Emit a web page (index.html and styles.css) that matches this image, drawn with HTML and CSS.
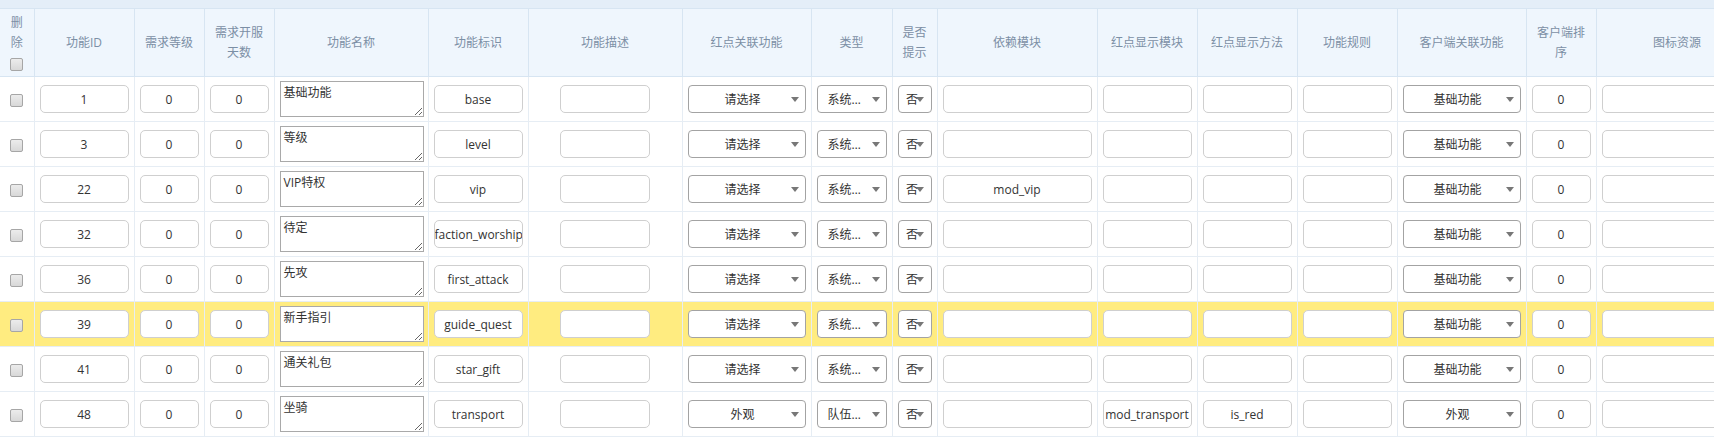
FILE: index.html
```html
<!DOCTYPE html>
<html lang="zh">
<head>
<meta charset="utf-8">
<title>功能配置</title>
<link rel="stylesheet" href="styles.css">
</head>
<body>
<div class="page">
  <table class="grid">
    <colgroup>
      <col class="w34"><col class="w100"><col class="w70"><col class="w70"><col class="w154"><col class="w100"><col class="w154"><col class="w129"><col class="w81"><col class="w45"><col class="w160"><col class="w100"><col class="w100"><col class="w100"><col class="w129"><col class="w70"><col class="w162">
    </colgroup>
    <thead>
      <tr>
        <th class="del-head">删<br>除<br><input type="checkbox" class="chk"></th>
        <th>功能ID</th>
        <th>需求等级</th>
        <th>需求开服天数</th>
        <th>功能名称</th>
        <th>功能标识</th>
        <th>功能描述</th>
        <th>红点关联功能</th>
        <th>类型</th>
        <th>是否提示</th>
        <th>依赖模块</th>
        <th>红点显示模块</th>
        <th>红点显示方法</th>
        <th>功能规则</th>
        <th>客户端关联功能</th>
        <th>客户端排序</th>
        <th>图标资源</th>
      </tr>
    </thead>
    <tbody>
      <tr>
        <td><input type="checkbox" class="chk"></td>
        <td><input class="inp w-full" value="1"></td>
        <td><input class="inp w-full" value="0"></td>
        <td><input class="inp w-full" value="0"></td>
        <td><textarea class="name">基础功能</textarea></td>
        <td><input class="inp w-full" value="base"></td>
        <td><input class="inp w-90" value=""></td>
        <td><select class="sel"><option>请选择</option></select></td>
        <td><select class="sel sel-type"><option>系统功能</option></select></td>
        <td><select class="sel sel-yn"><option>否</option></select></td>
        <td><input class="inp w-full" value=""></td>
        <td><input class="inp w-full" value=""></td>
        <td><input class="inp w-full" value=""></td>
        <td><input class="inp w-full" value=""></td>
        <td><select class="sel"><option>基础功能</option></select></td>
        <td><input class="inp w-full" value="0"></td>
        <td><input class="inp w-full" value=""></td>
      </tr>
      <tr>
        <td><input type="checkbox" class="chk"></td>
        <td><input class="inp w-full" value="3"></td>
        <td><input class="inp w-full" value="0"></td>
        <td><input class="inp w-full" value="0"></td>
        <td><textarea class="name">等级</textarea></td>
        <td><input class="inp w-full" value="level"></td>
        <td><input class="inp w-90" value=""></td>
        <td><select class="sel"><option>请选择</option></select></td>
        <td><select class="sel sel-type"><option>系统功能</option></select></td>
        <td><select class="sel sel-yn"><option>否</option></select></td>
        <td><input class="inp w-full" value=""></td>
        <td><input class="inp w-full" value=""></td>
        <td><input class="inp w-full" value=""></td>
        <td><input class="inp w-full" value=""></td>
        <td><select class="sel"><option>基础功能</option></select></td>
        <td><input class="inp w-full" value="0"></td>
        <td><input class="inp w-full" value=""></td>
      </tr>
      <tr>
        <td><input type="checkbox" class="chk"></td>
        <td><input class="inp w-full" value="22"></td>
        <td><input class="inp w-full" value="0"></td>
        <td><input class="inp w-full" value="0"></td>
        <td><textarea class="name">VIP特权</textarea></td>
        <td><input class="inp w-full" value="vip"></td>
        <td><input class="inp w-90" value=""></td>
        <td><select class="sel"><option>请选择</option></select></td>
        <td><select class="sel sel-type"><option>系统功能</option></select></td>
        <td><select class="sel sel-yn"><option>否</option></select></td>
        <td><input class="inp w-full" value="mod_vip"></td>
        <td><input class="inp w-full" value=""></td>
        <td><input class="inp w-full" value=""></td>
        <td><input class="inp w-full" value=""></td>
        <td><select class="sel"><option>基础功能</option></select></td>
        <td><input class="inp w-full" value="0"></td>
        <td><input class="inp w-full" value=""></td>
      </tr>
      <tr>
        <td><input type="checkbox" class="chk"></td>
        <td><input class="inp w-full" value="32"></td>
        <td><input class="inp w-full" value="0"></td>
        <td><input class="inp w-full" value="0"></td>
        <td><textarea class="name">待定</textarea></td>
        <td><input class="inp w-full" value="faction_worship"></td>
        <td><input class="inp w-90" value=""></td>
        <td><select class="sel"><option>请选择</option></select></td>
        <td><select class="sel sel-type"><option>系统功能</option></select></td>
        <td><select class="sel sel-yn"><option>否</option></select></td>
        <td><input class="inp w-full" value=""></td>
        <td><input class="inp w-full" value=""></td>
        <td><input class="inp w-full" value=""></td>
        <td><input class="inp w-full" value=""></td>
        <td><select class="sel"><option>基础功能</option></select></td>
        <td><input class="inp w-full" value="0"></td>
        <td><input class="inp w-full" value=""></td>
      </tr>
      <tr>
        <td><input type="checkbox" class="chk"></td>
        <td><input class="inp w-full" value="36"></td>
        <td><input class="inp w-full" value="0"></td>
        <td><input class="inp w-full" value="0"></td>
        <td><textarea class="name">先攻</textarea></td>
        <td><input class="inp w-full" value="first_attack"></td>
        <td><input class="inp w-90" value=""></td>
        <td><select class="sel"><option>请选择</option></select></td>
        <td><select class="sel sel-type"><option>系统功能</option></select></td>
        <td><select class="sel sel-yn"><option>否</option></select></td>
        <td><input class="inp w-full" value=""></td>
        <td><input class="inp w-full" value=""></td>
        <td><input class="inp w-full" value=""></td>
        <td><input class="inp w-full" value=""></td>
        <td><select class="sel"><option>基础功能</option></select></td>
        <td><input class="inp w-full" value="0"></td>
        <td><input class="inp w-full" value=""></td>
      </tr>
      <tr class="hl">
        <td><input type="checkbox" class="chk"></td>
        <td><input class="inp w-full" value="39"></td>
        <td><input class="inp w-full" value="0"></td>
        <td><input class="inp w-full" value="0"></td>
        <td><textarea class="name">新手指引</textarea></td>
        <td><input class="inp w-full" value="guide_quest"></td>
        <td><input class="inp w-90" value=""></td>
        <td><select class="sel"><option>请选择</option></select></td>
        <td><select class="sel sel-type"><option>系统功能</option></select></td>
        <td><select class="sel sel-yn"><option>否</option></select></td>
        <td><input class="inp w-full" value=""></td>
        <td><input class="inp w-full" value=""></td>
        <td><input class="inp w-full" value=""></td>
        <td><input class="inp w-full" value=""></td>
        <td><select class="sel"><option>基础功能</option></select></td>
        <td><input class="inp w-full" value="0"></td>
        <td><input class="inp w-full" value=""></td>
      </tr>
      <tr>
        <td><input type="checkbox" class="chk"></td>
        <td><input class="inp w-full" value="41"></td>
        <td><input class="inp w-full" value="0"></td>
        <td><input class="inp w-full" value="0"></td>
        <td><textarea class="name">通关礼包</textarea></td>
        <td><input class="inp w-full" value="star_gift"></td>
        <td><input class="inp w-90" value=""></td>
        <td><select class="sel"><option>请选择</option></select></td>
        <td><select class="sel sel-type"><option>系统功能</option></select></td>
        <td><select class="sel sel-yn"><option>否</option></select></td>
        <td><input class="inp w-full" value=""></td>
        <td><input class="inp w-full" value=""></td>
        <td><input class="inp w-full" value=""></td>
        <td><input class="inp w-full" value=""></td>
        <td><select class="sel"><option>基础功能</option></select></td>
        <td><input class="inp w-full" value="0"></td>
        <td><input class="inp w-full" value=""></td>
      </tr>
      <tr>
        <td><input type="checkbox" class="chk"></td>
        <td><input class="inp w-full" value="48"></td>
        <td><input class="inp w-full" value="0"></td>
        <td><input class="inp w-full" value="0"></td>
        <td><textarea class="name">坐骑</textarea></td>
        <td><input class="inp w-full" value="transport"></td>
        <td><input class="inp w-90" value=""></td>
        <td><select class="sel"><option>外观</option></select></td>
        <td><select class="sel sel-type"><option>队伍功能</option></select></td>
        <td><select class="sel sel-yn"><option>否</option></select></td>
        <td><input class="inp w-full" value=""></td>
        <td><input class="inp w-full" value="mod_transport"></td>
        <td><input class="inp w-full" value="is_red"></td>
        <td><input class="inp w-full" value=""></td>
        <td><select class="sel"><option>外观</option></select></td>
        <td><input class="inp w-full" value="0"></td>
        <td><input class="inp w-full" value=""></td>
      </tr>
    </tbody>
  </table>
</div>
</body>
</html>
```

FILE: styles.css
```css
html, body {
  margin: 0;
  padding: 0;
  overflow: hidden;
  background: #fff;
}

.page {
  padding-top: 8px;
  background: #e4eef8;
  width: max-content;
}

.grid {
  border-collapse: collapse;
  table-layout: fixed;
  width: 1758px;
  font-family: "Open Sans", "Noto Sans CJK SC", "Microsoft YaHei", sans-serif;
  font-size: 12px;
  color: #333;
  background: #fff;
}

.w34 { width: 34px; }
.w45 { width: 45px; }
.w70 { width: 70px; }
.w81 { width: 81px; }
.w100 { width: 100px; }
.w129 { width: 129px; }
.w154 { width: 154px; }
.w160 { width: 160px; }
.w162 { width: 162px; }

.grid th {
  height: 67px;
  padding: 0 8px;
  background: #eff6fd;
  border: 1px solid #d7e5f2;
  color: #7c8fa5;
  font-weight: normal;
  line-height: 20px;
  text-align: center;
  vertical-align: middle;
}

.grid th:first-child,
.grid td:first-child {
  border-left: none;
}

.grid th.del-head {
  padding: 0;
}

.grid td {
  height: 44px;
  padding: 0 5px;
  border: 1px solid #e6edf4;
  text-align: center;
  vertical-align: middle;
  background: #fff;
}

.grid tr.hl td {
  background: #ffec80;
}

.chk {
  appearance: none;
  -webkit-appearance: none;
  display: inline-block;
  width: 13px;
  height: 13px;
  margin: 0;
  border: 1px solid #a6a6a6;
  border-radius: 2px;
  background: linear-gradient(#ececec, #d8d8d8);
  vertical-align: middle;
}

.del-head .chk {
  margin-top: 3px;
}

.inp {
  box-sizing: border-box;
  height: 28px;
  margin: 0;
  padding: 0;
  border: 1px solid #cfcfcf;
  border-radius: 5px;
  background: #fff;
  font: inherit;
  color: #333;
  text-align: center;
  vertical-align: middle;
  outline: none;
}

.w-full { width: 100%; }
.w-90 { width: 90px; }

.name {
  box-sizing: border-box;
  display: block;
  width: 144px;
  height: 36px;
  margin: 0;
  padding: 2px 3px;
  border: 1px solid #a9a9a9;
  font: inherit;
  line-height: 17px;
  color: #333;
  background: #fff;
}

.sel {
  appearance: none;
  -webkit-appearance: none;
  box-sizing: border-box;
  width: 100%;
  height: 28px;
  margin: 0;
  padding: 0 20px 0 12px;
  border: 1px solid #a3a3a3;
  border-radius: 4px;
  background: #fff url("data:image/svg+xml,%3Csvg xmlns='http://www.w3.org/2000/svg' width='8' height='5'%3E%3Cpath d='M0 0h8L4 5z' fill='%23777'/%3E%3C/svg%3E") no-repeat right 6px center;
  font: inherit;
  color: #333;
  text-align: center;
  text-align-last: center;
  text-overflow: ellipsis;
  vertical-align: middle;
  outline: none;
}

.sel-type {
  padding: 0 20px 0 10px;
}

.sel-yn {
  padding: 0 12px 0 7px;
  background-position: right 7px center;
}
```
